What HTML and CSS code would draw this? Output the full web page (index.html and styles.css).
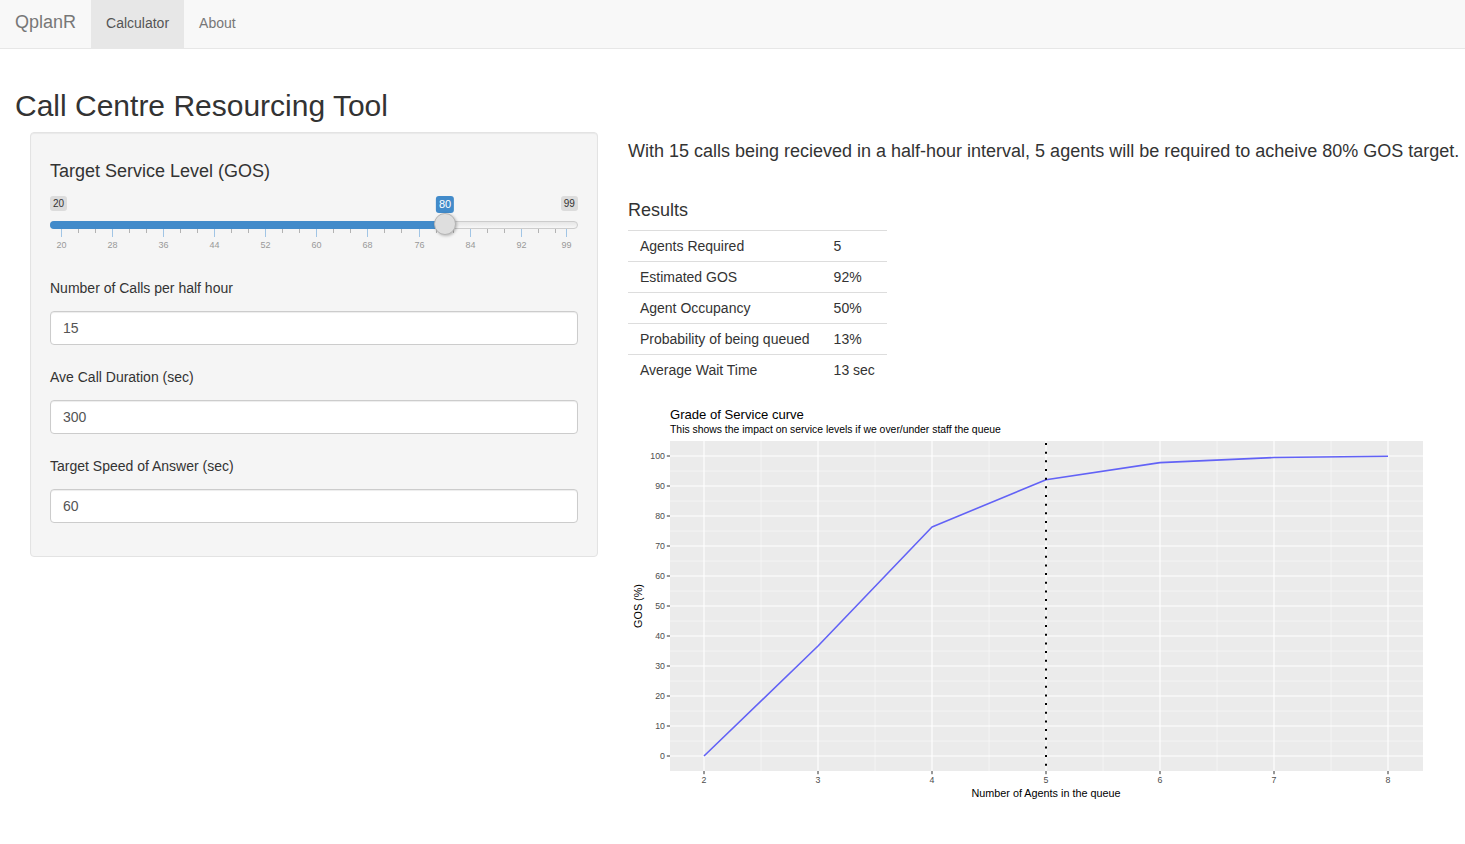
FILE: index.html
```html
<!DOCTYPE html>
<html lang="en">
<head>
<meta charset="utf-8">
<title>QplanR</title>
<link rel="stylesheet" href="styles.css">
</head>
<body>
<nav class="navbar">
  <span class="brand">QplanR</span>
  <ul class="nav">
    <li class="active"><a href="#">Calculator</a></li>
    <li><a href="#">About</a></li>
  </ul>
</nav>
<main class="page">
  <h2 class="title">Call Centre Resourcing Tool</h2>
  <div class="inner">
    <div class="row">
      <div class="col-side">
        <form class="well">
          <div class="slider-group">
            <label class="slider-label">Target Service Level (GOS)</label>
            <div class="irs">
              <span class="irs-line"></span>
              <span class="irs-bar" style="width:395px"></span>
              <span class="irs-min">20</span>
              <span class="irs-max">99</span>
              <span class="irs-single" style="left:395px">80</span>
              <div class="irs-grid">
                <span class="pol" style="left:11px"></span><span class="gtext" style="left:11px">20</span>
                <span class="pol small" style="left:28px"></span><span class="pol small" style="left:45px"></span>
                <span class="pol" style="left:62px"></span><span class="gtext" style="left:62px">28</span>
                <span class="pol small" style="left:79px"></span><span class="pol small" style="left:96px"></span>
                <span class="pol" style="left:113px"></span><span class="gtext" style="left:113px">36</span>
                <span class="pol small" style="left:130px"></span><span class="pol small" style="left:147px"></span>
                <span class="pol" style="left:164px"></span><span class="gtext" style="left:164px">44</span>
                <span class="pol small" style="left:181px"></span><span class="pol small" style="left:198px"></span>
                <span class="pol" style="left:215px"></span><span class="gtext" style="left:215px">52</span>
                <span class="pol small" style="left:232px"></span><span class="pol small" style="left:249px"></span>
                <span class="pol" style="left:266px"></span><span class="gtext" style="left:266px">60</span>
                <span class="pol small" style="left:283px"></span><span class="pol small" style="left:300px"></span>
                <span class="pol" style="left:317px"></span><span class="gtext" style="left:317px">68</span>
                <span class="pol small" style="left:334px"></span><span class="pol small" style="left:351px"></span>
                <span class="pol" style="left:369px"></span><span class="gtext" style="left:369px">76</span>
                <span class="pol small" style="left:386px"></span><span class="pol small" style="left:403px"></span>
                <span class="pol" style="left:420px"></span><span class="gtext" style="left:420px">84</span>
                <span class="pol small" style="left:437px"></span><span class="pol small" style="left:454px"></span>
                <span class="pol" style="left:471px"></span><span class="gtext" style="left:471px">92</span>
                <span class="pol small" style="left:488px"></span><span class="pol small" style="left:505px"></span>
                <span class="pol" style="left:516px"></span><span class="gtext" style="left:516px">99</span>
              </div>
              <span class="irs-handle" style="left:395px"></span>
            </div>
          </div>
          <div class="field">
            <label for="calls">Number of Calls per half hour</label>
            <input id="calls" class="form-control" type="text" value="15">
          </div>
          <div class="field">
            <label for="dur">Ave Call Duration (sec)</label>
            <input id="dur" class="form-control" type="text" value="300">
          </div>
          <div class="field">
            <label for="speed">Target Speed of Answer (sec)</label>
            <input id="speed" class="form-control" type="text" value="60">
          </div>
        </form>
      </div>
      <div class="col-main">
        <h4 class="summary">With 15 calls being recieved in a half-hour interval, 5 agents will be required to acheive 80% GOS target.</h4>
        <h4 class="results-h">Results</h4>
        <table class="results">
          <tbody>
            <tr><td>Agents Required</td><td>5</td></tr>
            <tr><td>Estimated GOS</td><td>92%</td></tr>
            <tr><td>Agent Occupancy</td><td>50%</td></tr>
            <tr><td>Probability of being queued</td><td>13%</td></tr>
            <tr><td>Average Wait Time</td><td>13 sec</td></tr>
          </tbody>
        </table>
        <svg class="chart" width="822" height="410" viewBox="0 0 822 410">
          <text class="c-title" x="42" y="19">Grade of Service curve</text>
          <text class="c-sub" x="42" y="33">This shows the impact on service levels if we over/under staff the queue</text>
          <rect x="42" y="41" width="753" height="330" fill="#ebebeb"/>
          <g stroke="#fafafa" stroke-width="0.6">
            <line x1="42" x2="795" y1="341" y2="341"/><line x1="42" x2="795" y1="311" y2="311"/>
            <line x1="42" x2="795" y1="281" y2="281"/><line x1="42" x2="795" y1="251" y2="251"/>
            <line x1="42" x2="795" y1="221" y2="221"/><line x1="42" x2="795" y1="191" y2="191"/>
            <line x1="42" x2="795" y1="161" y2="161"/><line x1="42" x2="795" y1="131" y2="131"/>
            <line x1="42" x2="795" y1="101" y2="101"/><line x1="42" x2="795" y1="71" y2="71"/>
            <line y1="41" y2="371" x1="133" x2="133"/><line y1="41" y2="371" x1="247" x2="247"/>
            <line y1="41" y2="371" x1="361" x2="361"/><line y1="41" y2="371" x1="475" x2="475"/>
            <line y1="41" y2="371" x1="589" x2="589"/><line y1="41" y2="371" x1="703" x2="703"/>
          </g>
          <g stroke="#ffffff" stroke-width="1.1">
            <line x1="42" x2="795" y1="356" y2="356"/><line x1="42" x2="795" y1="326" y2="326"/>
            <line x1="42" x2="795" y1="296" y2="296"/><line x1="42" x2="795" y1="266" y2="266"/>
            <line x1="42" x2="795" y1="236" y2="236"/><line x1="42" x2="795" y1="206" y2="206"/>
            <line x1="42" x2="795" y1="176" y2="176"/><line x1="42" x2="795" y1="146" y2="146"/>
            <line x1="42" x2="795" y1="116" y2="116"/><line x1="42" x2="795" y1="86" y2="86"/>
            <line x1="42" x2="795" y1="56" y2="56"/>
            <line y1="41" y2="371" x1="76" x2="76"/><line y1="41" y2="371" x1="190" x2="190"/>
            <line y1="41" y2="371" x1="304" x2="304"/><line y1="41" y2="371" x1="418" x2="418"/>
            <line y1="41" y2="371" x1="532" x2="532"/><line y1="41" y2="371" x1="646" x2="646"/>
            <line y1="41" y2="371" x1="760" x2="760"/>
          </g>
          <polyline points="76,356 190,246 304,127 418,79.7 532,62.6 646,57.5 760,56.3" fill="none" stroke="#6262f6" stroke-width="1.6" stroke-linejoin="round"/>
          <line x1="418" x2="418" y1="43" y2="371" stroke="#000" stroke-width="2" stroke-dasharray="2 6.67"/>
          <g stroke="#333" stroke-width="1">
            <line x1="38.8" x2="42" y1="356" y2="356"/><line x1="38.8" x2="42" y1="326" y2="326"/>
            <line x1="38.8" x2="42" y1="296" y2="296"/><line x1="38.8" x2="42" y1="266" y2="266"/>
            <line x1="38.8" x2="42" y1="236" y2="236"/><line x1="38.8" x2="42" y1="206" y2="206"/>
            <line x1="38.8" x2="42" y1="176" y2="176"/><line x1="38.8" x2="42" y1="146" y2="146"/>
            <line x1="38.8" x2="42" y1="116" y2="116"/><line x1="38.8" x2="42" y1="86" y2="86"/>
            <line x1="38.8" x2="42" y1="56" y2="56"/>
            <line y1="371" y2="374.2" x1="76" x2="76"/><line y1="371" y2="374.2" x1="190" x2="190"/>
            <line y1="371" y2="374.2" x1="304" x2="304"/><line y1="371" y2="374.2" x1="418" x2="418"/>
            <line y1="371" y2="374.2" x1="532" x2="532"/><line y1="371" y2="374.2" x1="646" x2="646"/>
            <line y1="371" y2="374.2" x1="760" x2="760"/>
          </g>
          <g class="c-tick" text-anchor="end">
            <text x="37" y="359.2">0</text><text x="37" y="329.2">10</text>
            <text x="37" y="299.2">20</text><text x="37" y="269.2">30</text>
            <text x="37" y="239.2">40</text><text x="37" y="209.2">50</text>
            <text x="37" y="179.2">60</text><text x="37" y="149.2">70</text>
            <text x="37" y="119.2">80</text><text x="37" y="89.2">90</text>
            <text x="37" y="59.2">100</text>
          </g>
          <g class="c-tick" text-anchor="middle">
            <text x="76" y="382.8">2</text><text x="190" y="382.8">3</text>
            <text x="304" y="382.8">4</text><text x="418" y="382.8">5</text>
            <text x="532" y="382.8">6</text><text x="646" y="382.8">7</text>
            <text x="760" y="382.8">8</text>
          </g>
          <text class="c-axis" x="418" y="396.9" text-anchor="middle">Number of Agents in the queue</text>
          <text class="c-axis" transform="translate(13.5,206) rotate(-90)" text-anchor="middle">GOS (%)</text>
        </svg>
      </div>
    </div>
  </div>
</main>
</body>
</html>
```

FILE: styles.css
```css
* {
  box-sizing: border-box;
}

html,
body {
  margin: 0;
}

body {
  font-family: "Liberation Sans", Arial, Helvetica, sans-serif;
  font-size: 14px;
  line-height: 1.42857;
  color: #333;
  background: #fff;
}

/* ---------- navbar ---------- */
.navbar {
  display: flex;
  align-items: flex-start;
  height: 49px;
  background: #f8f8f8;
  border-bottom: 1px solid #e7e7e7;
}

.brand {
  display: block;
  padding: 12px 15px 16px;
  font-size: 18px;
  line-height: 20px;
  color: #777;
}

.nav {
  display: flex;
  list-style: none;
  margin: 0;
  padding: 0;
}

.nav a {
  display: block;
  padding: 13px 15px 15px;
  line-height: 20px;
  color: #777;
  text-decoration: none;
}

.nav .active a {
  background: #e7e7e7;
  color: #555;
}

/* ---------- page ---------- */
.page {
  padding: 20px 15px 0;
}

.title {
  margin: 20px 0 10px;
  font-size: 30px;
  font-weight: 500;
  line-height: 1.1;
}

.inner {
  padding: 0 15px;
}

.row {
  display: grid;
  grid-template-columns: 5fr 7fr;
  margin: 0 -15px;
}

.col-side,
.col-main {
  padding: 0 15px;
  min-width: 0;
}

/* ---------- sidebar well ---------- */
.well {
  margin: 0;
  padding: 19px;
  background: #f5f5f5;
  border: 1px solid #e3e3e3;
  border-radius: 4px;
  box-shadow: inset 0 1px 1px rgba(0, 0, 0, 0.05);
}

.slider-label {
  display: block;
  margin-top: 9px;
  font-size: 18px;
  line-height: 20px;
}

/* ---------- range slider ---------- */
.irs {
  position: relative;
  height: 56px;
  margin-top: 15px;
  margin-bottom: 26px;
}

.irs-line {
  position: absolute;
  left: 0;
  right: 0;
  top: 25px;
  height: 8px;
  border: 1px solid #cccccc;
  border-radius: 16px;
  background: linear-gradient(to bottom, #dddddd -50%, #ffffff 150%);
}

.irs-bar {
  position: absolute;
  left: 0;
  top: 25px;
  height: 8px;
  background: #428bca;
  border-radius: 16px 0 0 16px;
}

.irs-min,
.irs-max {
  position: absolute;
  top: 0;
  padding: 1px 3px;
  font-size: 10px;
  line-height: 1.333;
  color: #333;
  background: rgba(0, 0, 0, 0.1);
  border-radius: 3px;
}

.irs-min {
  left: 0;
}

.irs-max {
  right: 0;
}

.irs-single {
  position: absolute;
  top: 0;
  transform: translateX(-50%);
  padding: 1px 3px;
  font-size: 11px;
  line-height: 1.333;
  color: #fff;
  background: #428bca;
  border-radius: 3px;
}

.irs-handle {
  position: absolute;
  top: 17px;
  width: 22px;
  height: 22px;
  margin-left: -11px;
  background: #dedede;
  border: 1px solid #b5b5b5;
  border-radius: 50%;
  box-shadow: 1px 1px 3px rgba(0, 0, 0, 0.25);
}

.irs-grid {
  position: absolute;
  left: 0;
  right: 0;
  top: 33px;
  height: 23px;
}

.pol {
  position: absolute;
  top: 0;
  width: 1px;
  height: 8px;
  background: #a1c5e5;
}

.pol.small {
  height: 4px;
  background: #b3b3b3;
}

.gtext {
  position: absolute;
  top: 11px;
  transform: translateX(-50%);
  font-size: 9px;
  line-height: 11px;
  color: #999;
  margin-left: 0.5px;
}

/* ---------- inputs ---------- */
.field {
  margin-bottom: 22px;
}

.field:last-child {
  margin-bottom: 14px;
}

.field label {
  display: block;
  margin-bottom: 13px;
  line-height: 20px;
  font-weight: normal;
}

.form-control {
  display: block;
  width: 100%;
  height: 34px;
  padding: 6px 12px;
  font-family: inherit;
  font-size: 14px;
  line-height: 20px;
  color: #555;
  background: #fff;
  border: 1px solid #ccc;
  border-radius: 4px;
  box-shadow: inset 0 1px 1px rgba(0, 0, 0, 0.075);
}

/* ---------- main panel ---------- */
.summary {
  margin: 10px 0 0;
  font-size: 18px;
  font-weight: 500;
  line-height: 1.1;
  white-space: nowrap;
}

.results-h {
  margin: 39px 0 9px;
  font-size: 18px;
  font-weight: 500;
  line-height: 1.1;
}

.results {
  border-collapse: collapse;
}

.results td {
  border-top: 1px solid #ddd;
  padding: 5px 12px;
  line-height: 20px;
}

.chart {
  display: block;
  margin-top: 15px;
  font-family: "Liberation Sans", Arial, Helvetica, sans-serif;
}

.c-title {
  font-size: 13.1px;
  fill: #000;
}

.c-sub {
  font-size: 10.4px;
  fill: #000;
}

.c-tick {
  font-size: 8.8px;
  fill: #4d4d4d;
}

.c-axis {
  font-size: 10.8px;
  fill: #000;
}
```
